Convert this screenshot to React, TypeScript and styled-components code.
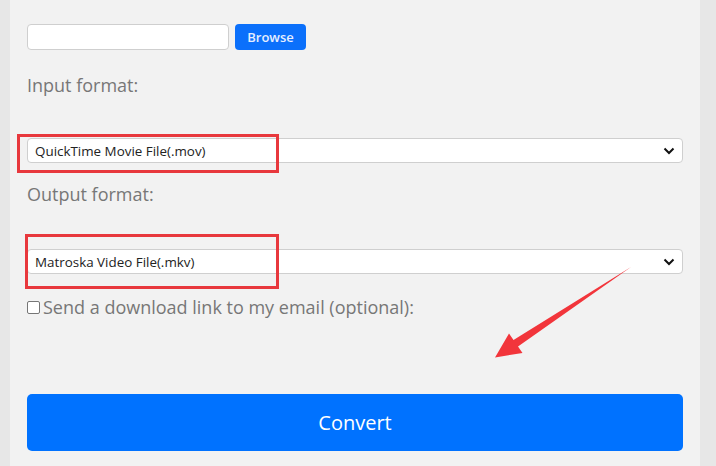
import styled, { createGlobalStyle } from 'styled-components';

const GlobalStyle = createGlobalStyle`
	html, body {
		margin: 0;
		padding: 0;
		background: #e7e7e7;
		font-family: 'Open Sans', 'Noto Sans', sans-serif;
	}
	* {
		box-sizing: border-box;
	}
`;

export default function App() {
	return (
		<>
			<GlobalStyle />
			<Panel>
				<FileRow>
					<FileField type='text' />
					<BrowseButton>Browse</BrowseButton>
				</FileRow>

				<Label>Input format:</Label>
				<SelectWrap $gap={39}>
					<Select defaultValue='mov'>
						<option value='mov'>QuickTime Movie File(.mov)</option>
					</Select>
					<Chevron />
					<Highlight $left={-10} $top={-4} $width={262} $height={39} />
				</SelectWrap>

				<Label $gap={18}>Output format:</Label>
				<SelectWrap $gap={41}>
					<Select defaultValue='mkv'>
						<option value='mkv'>Matroska Video File(.mkv)</option>
					</Select>
					<Chevron />
					<Highlight $left={-2} $top={-15} $width={254} $height={55} />
				</SelectWrap>

				<CheckRow>
					<Checkbox type='checkbox' />
					Send a download link to my email (optional):
				</CheckRow>

				<ConvertButton>Convert</ConvertButton>

				<Arrow viewBox='480 250 160 120'>
					<polygon
						points='631,267 518,346.5 522.5,353 495,357.5 509,333.5 513.5,340'
						fill='#f2353b'
					/>
				</Arrow>
			</Panel>
		</>
	);
}

function Chevron() {
	return (
		<ChevronIcon viewBox='0 0 12 8'>
			<path d='M1.5 1.5 L6 6 L10.5 1.5' fill='none' stroke='#111' strokeWidth='2' />
		</ChevronIcon>
	);
}

const Panel = styled.main`
	position: relative;
	display: flex;
	flex-direction: column;
	margin-left: 10px;
	width: 690px;
	min-height: 100vh;
	padding: 24px 17px 0;
	background: #f2f2f2;
`;

const FileRow = styled.div`
	display: flex;
	gap: 6px;
	height: 26px;
`;

const FileField = styled.input`
	width: 202px;
	height: 26px;
	border: 1px solid #cfcfcf;
	border-radius: 4px;
	background: #fff;
	outline: none;
`;

const BrowseButton = styled.button`
	width: 71px;
	height: 26px;
	border: none;
	border-radius: 4px;
	background: #0b70fb;
	color: #e6eeff;
	font-family: 'Open Sans', sans-serif;
	font-size: 13px;
	font-weight: 600;
	padding: 0;
`;

const Label = styled.div<{ $gap?: number }>`
	margin-top: ${(p) => p.$gap ?? 22}px;
	font-size: 18px;
	line-height: 27px;
	color: #777;
`;

const SelectWrap = styled.div<{ $gap: number }>`
	position: relative;
	margin-top: ${(p) => p.$gap}px;
	height: 25px;
`;

const Select = styled.select`
	appearance: none;
	width: 100%;
	height: 25px;
	padding: 0 30px 0 7px;
	border: 1px solid #cfcfcf;
	border-radius: 4px;
	background: #fff;
	color: #222;
	font-family: 'Open Sans', sans-serif;
	font-size: 13.4px;
	outline: none;
`;

const ChevronIcon = styled.svg`
	position: absolute;
	right: 8px;
	top: 50%;
	width: 12px;
	height: 8px;
	transform: translateY(-50%);
	pointer-events: none;
`;

interface HighlightProps {
	$left: number;
	$top: number;
	$width: number;
	$height: number;
}

const Highlight = styled.div<HighlightProps>`
	position: absolute;
	left: ${(p) => p.$left}px;
	top: ${(p) => p.$top}px;
	width: ${(p) => p.$width}px;
	height: ${(p) => p.$height}px;
	border: 3px solid #e8383d;
	pointer-events: none;
`;

const CheckRow = styled.label`
	display: flex;
	align-items: center;
	margin-top: 20px;
	font-size: 18px;
	line-height: 27px;
	color: #777;
`;

const Checkbox = styled.input`
	appearance: none;
	width: 13px;
	height: 13px;
	margin: 0 3px 0 0;
	border: 1px solid #767676;
	border-radius: 2px;
	background: #fff;
`;

const ConvertButton = styled.button`
	margin-top: 73px;
	height: 57px;
	border: none;
	border-radius: 5px;
	background: #0072ff;
	color: #fff;
	font-family: 'Open Sans', sans-serif;
	font-size: 20px;
`;

const Arrow = styled.svg`
	position: absolute;
	left: 470px;
	top: 250px;
	width: 160px;
	height: 120px;
	pointer-events: none;
`;
